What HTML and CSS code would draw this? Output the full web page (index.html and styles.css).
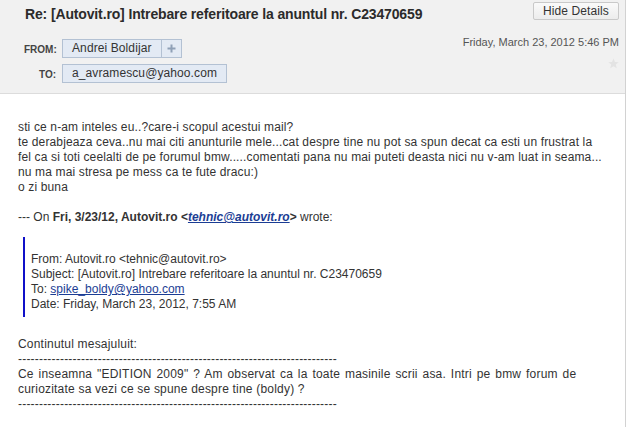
FILE: index.html
```html
<!DOCTYPE html>
<html>
<head>
<meta charset="utf-8">
<link rel="stylesheet" href="styles.css">
</head>
<body>
<div class="mail">
  <div class="header">
    <div class="left">
      <h1 class="title">Re: [Autovit.ro] Intrebare referitoare la anuntul nr. C23470659</h1>
      <div class="meta">
        <div class="row"><span class="label">FROM:</span><span class="chip"><span class="name">Andrei Boldijar</span><span class="add"><svg width="9" height="9" viewBox="0 0 9 9"><path d="M4.5 0.5v8M0.5 4.5h8" stroke="#8fa0b6" stroke-width="2"/></svg></span></span></div>
        <div class="row"><span class="label">TO:</span><span class="chip"><span class="name">a_avramescu@yahoo.com</span></span></div>
      </div>
    </div>
    <div class="right">
      <button class="btn">Hide Details</button>
      <div class="date">Friday, March 23, 2012 5:46 PM</div>
      <svg class="star" width="11" height="11" viewBox="0 0 20 20"><polygon points="10,1 12.6,7.3 19.5,7.6 14.1,11.9 16,18.6 10,14.8 4,18.6 5.9,11.9 0.5,7.6 7.4,7.3" fill="#e3e3e3"/></svg>
    </div>
  </div>
  <div class="body">
    <div class="msg">sti ce n-am inteles eu..?care-i scopul acestui mail?<br>te derabjeaza ceva..nu mai citi anunturile mele...cat despre tine nu pot sa spun decat ca esti un frustrat la<br>fel ca si toti ceelalti de pe forumul bmw.....comentati pana nu mai puteti deasta nici nu v-am luat in seama...<br>nu ma mai stresa pe mess ca te fute dracu:)<br>o zi buna</div>
    <div class="intro">--- On <b>Fri, 3/23/12, Autovit.ro &lt;<a class="link"><i>tehnic@autovit.ro</i></a>&gt;</b> wrote:</div>
    <blockquote class="quote">From: Autovit.ro &lt;tehnic@autovit.ro&gt;<br>Subject: [Autovit.ro] Intrebare referitoare la anuntul nr. C23470659<br>To: <a class="link">spike_boldy@yahoo.com</a><br>Date: Friday, March 23, 2012, 7:55 AM</blockquote>
    <div class="content">Continutul mesajuluit:<br>----------------------------------------------------------------------------<br><span class="wide">Ce inseamna "EDITION 2009" ? Am observat ca la toate masinile scrii asa. Intri pe bmw forum de</span><br>curiozitate sa vezi ce se spune despre tine (boldy) ?<br>----------------------------------------------------------------------------</div>
  </div>
</div>
</body>
</html>
```

FILE: styles.css
```css
html, body {
  margin: 0;
  padding: 0;
  background: #fff;
}
body {
  font-family: "Liberation Sans", Arial, sans-serif;
  color: #333;
}
.mail {
  width: 625px;
  height: 427px;
  border-right: 1px solid #d2d2d2;
}
.header {
  height: 93px;
  background: #f1f1f1;
  border-bottom: 1px solid #dcdcdc;
  display: flex;
  justify-content: space-between;
}
.left {
  display: flex;
  flex-direction: column;
}
.title {
  margin: 6px 0 0 25px;
  font-size: 14px;
  line-height: 16px;
  font-weight: bold;
  letter-spacing: -0.14px;
  color: #2b2b2b;
}
.meta {
  margin-top: 17px;
  display: flex;
  flex-direction: column;
  gap: 6px;
}
.row {
  display: flex;
  align-items: center;
  gap: 6px;
}
.label {
  width: 32px;
  margin-left: 24px;
  padding-top: 2px;
  text-align: right;
  font-size: 10px;
  font-weight: bold;
  color: #444;
}
.chip {
  display: flex;
  border: 1px solid #b3c1d3;
  background: #e3eaf4;
  font-size: 12px;
  line-height: 17px;
  color: #333;
}
.name {
  padding: 0 9px;
  letter-spacing: 0.1px;
}
.add {
  width: 19px;
  border-left: 1px solid #b3c1d3;
  display: flex;
  align-items: center;
  justify-content: center;
}
.right {
  display: flex;
  flex-direction: column;
  align-items: flex-end;
  padding-right: 6px;
}
.btn {
  margin-top: 2px;
  width: 86px;
  height: 18px;
  padding: 0;
  border: 1px solid #c9c9c9;
  border-radius: 2px;
  background: linear-gradient(#fafafa, #ececec);
  font-family: "Liberation Sans", Arial, sans-serif;
  font-size: 12px;
  line-height: 16px;
  letter-spacing: 0.1px;
  color: #333;
}
.date {
  margin-top: 16px;
  font-size: 11px;
  line-height: 13px;
  color: #555;
}
.star {
  margin-top: 9px;
  margin-right: 0;
}
.body {
  padding: 26px 0 0 18px;
  font-size: 12px;
  line-height: 15px;
}
.msg {
  margin-bottom: 15px;
  letter-spacing: 0.14px;
  white-space: nowrap;
}
.content {
  letter-spacing: 0.2px;
  white-space: nowrap;
}
.wide {
  word-spacing: 1.3px;
}
.link {
  color: #1b3d94;
  text-decoration: underline;
}
.quote {
  margin: 12px 0 20px 5px;
  padding: 15px 0 5px 6px;
  border-left: 2px solid #1010c8;
}
```
